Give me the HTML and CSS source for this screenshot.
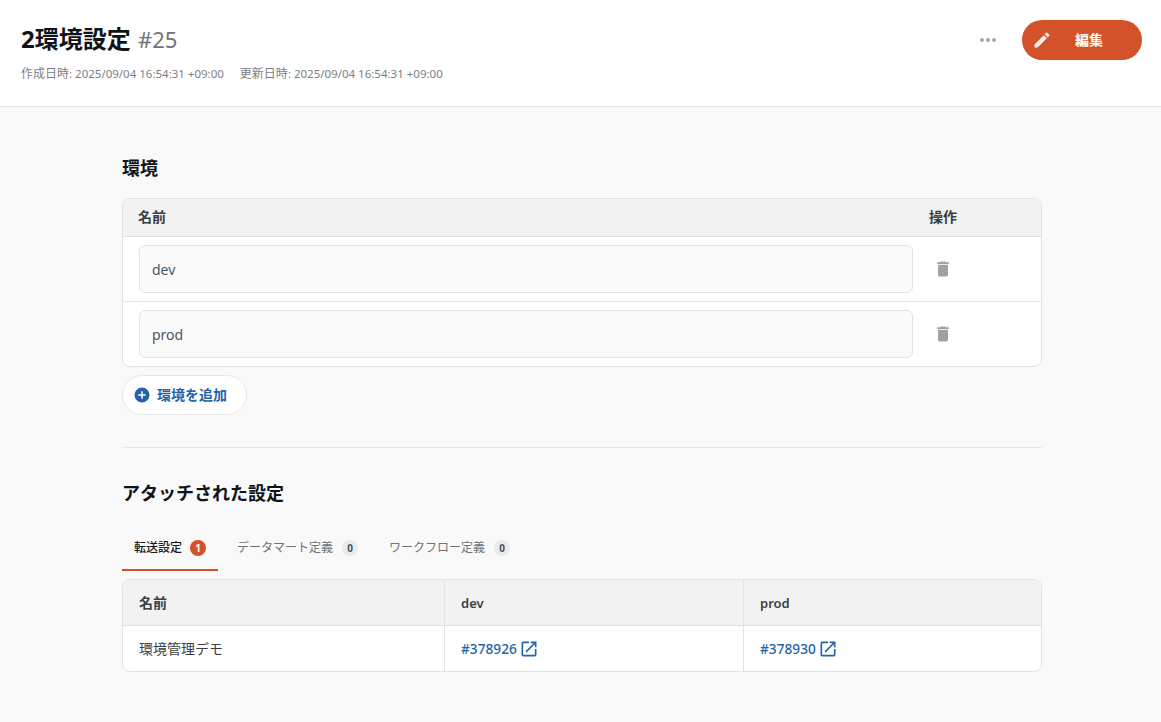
FILE: index.html
```html
<!DOCTYPE html>
<html lang="ja">
<head>
<meta charset="utf-8">
<title>2環境設定 #25</title>
<link rel="stylesheet" href="styles.css">
</head>
<body>
<header class="page-header">
  <div class="head-left">
    <h1 class="title">2環境設定 <span class="title-id">#25</span></h1>
    <div class="meta"><span>作成日時<span class="lat">: 2025/09/04 16:54:31 +09:00</span></span><span>更新日時<span class="lat">: 2025/09/04 16:54:31 +09:00</span></span></div>
  </div>
  <div class="head-right">
    <button class="more" aria-label="more"><i></i><i></i><i></i></button>
    <button class="edit">
      <svg class="edit-icon" viewBox="0 0 24 24" width="20" height="20"><path fill="#fff" fill-opacity=".9" d="M3 17.25V21h3.75L17.81 9.94l-3.75-3.75L3 17.25zM20.71 7.04a1 1 0 0 0 0-1.41l-2.34-2.34a1 1 0 0 0-1.41 0l-1.83 1.83 3.75 3.75 1.83-1.83z"/></svg>
      <span class="edit-label">編集</span>
    </button>
  </div>
</header>
<main class="content">
  <h2 class="section-title first">環境</h2>
  <div class="env-table">
    <div class="env-head"><div>名前</div><div>操作</div></div>
    <div class="env-row">
      <div class="input">dev</div>
      <div class="trash"><svg viewBox="0 0 24 24" width="20" height="20"><path fill="#9ea2a6" d="M6 19c0 1.1.9 2 2 2h8c1.1 0 2-.9 2-2V7H6v12zM19 4h-3.5l-1-1h-5l-1 1H5v2h14V4z"/></svg></div>
    </div>
    <div class="env-row">
      <div class="input">prod</div>
      <div class="trash"><svg viewBox="0 0 24 24" width="20" height="20"><path fill="#9ea2a6" d="M6 19c0 1.1.9 2 2 2h8c1.1 0 2-.9 2-2V7H6v12zM19 4h-3.5l-1-1h-5l-1 1H5v2h14V4z"/></svg></div>
    </div>
  </div>
  <button class="add">
    <svg viewBox="0 0 24 24" width="18" height="18"><path fill="#2563a8" d="M12 2a10 10 0 1 0 0 20 10 10 0 0 0 0-20zm5 11h-4v4h-2v-4H7v-2h4V7h2v4h4v2z"/></svg>
    <span class="add-label">環境を追加</span>
  </button>
  <hr class="divider">
  <h2 class="section-title">アタッチされた設定</h2>
  <nav class="tabs">
    <a class="tab active">転送設定 <b class="badge hot">1</b></a>
    <a class="tab">データマート定義 <b class="badge">0</b></a>
    <a class="tab">ワークフロー定義 <b class="badge">0</b></a>
  </nav>
  <div class="res-table">
    <div class="res-cell th cjk-cell">名前</div>
    <div class="res-cell th lat-cell">dev</div>
    <div class="res-cell th lat-cell">prod</div>
    <div class="res-cell td cjk-cell">環境管理デモ</div>
    <div class="res-cell td"><a class="link">#378926<svg viewBox="0 0 24 24" width="20" height="20"><path fill="#2563a8" d="M19 19H5V5h7V3H5a2 2 0 0 0-2 2v14a2 2 0 0 0 2 2h14a2 2 0 0 0 2-2v-7h-2v7zM14 3v2h3.59l-9.83 9.83 1.41 1.41L19 6.41V10h2V3h-7z"/></svg></a></div>
    <div class="res-cell td"><a class="link">#378930<svg viewBox="0 0 24 24" width="20" height="20"><path fill="#2563a8" d="M19 19H5V5h7V3H5a2 2 0 0 0-2 2v14a2 2 0 0 0 2 2h14a2 2 0 0 0 2-2v-7h-2v7zM14 3v2h3.59l-9.83 9.83 1.41 1.41L19 6.41V10h2V3h-7z"/></svg></a></div>
  </div>
</main>
</body>
</html>
```
FILE: styles.css
```css
* { box-sizing: border-box; }
html, body { margin: 0; height: 100%; }
body {
  background: #f9f9f9;
  color: #333;
  font-family: "Noto Sans", "Noto Sans CJK JP", sans-serif;
  overflow: hidden;
}
button { font-family: inherit; cursor: pointer; }

.page-header {
  height: 107px;
  background: #fff;
  border-bottom: 1px solid #e4e4e4;
  padding: 20px 19px 0 21px;
  display: flex;
  justify-content: space-between;
  align-items: flex-start;
}
.title {
  margin: 0;
  font-size: 24px;
  line-height: 38px;
  font-weight: 700;
  color: #0f1419;
}
.title-id { font-weight: 400; font-size: 22px; color: #6f757b; margin-left: 1px; }
.meta {
  margin-top: 7px;
  font-size: 12px;
  line-height: 18px;
  color: #7b7f84;
  display: flex;
  gap: 16px;
}
.lat { font-size: 11.5px; }
.head-right { display: flex; align-items: center; gap: 24px; }
.more {
  border: 0;
  background: none;
  padding: 0;
  width: 20px;
  display: flex;
  justify-content: center;
  gap: 2px;
}
.more i { width: 4px; height: 4px; border-radius: 50%; background: #a2a6aa; }
.edit {
  width: 120px;
  height: 40px;
  border: 0;
  border-radius: 20px;
  background: #d35229;
  color: #fff;
  display: flex;
  align-items: center;
  padding: 0 0 0 10px;
  font-size: 14px;
  font-weight: 700;
}
.edit-label { margin-left: 23px; padding-bottom: 2px; }

.content { width: 920px; margin: 0 0 0 122px; }
.section-title {
  margin: 0;
  font-size: 18px;
  line-height: 26px;
  font-weight: 700;
  color: #0f1419;
}
.section-title.first { padding-top: 48px; }

.env-table {
  margin-top: 17px;
  background: #fff;
  border: 1px solid #e3e3e3;
  border-radius: 8px;
  overflow: hidden;
}
.env-head {
  display: grid;
  grid-template-columns: 1fr 112px;
  height: 38px;
  padding-bottom: 3px;
  align-items: center;
  background: #f2f2f2;
  border-bottom: 1px solid #e0e0e0;
  padding-left: 15px;
  font-size: 14px;
  font-weight: 700;
  color: #3a3f44;
}
.env-row {
  display: grid;
  grid-template-columns: 1fr 128px;
  align-items: center;
  height: 64px;
  padding-left: 16px;
}
.env-row + .env-row { border-top: 1px solid #e6e6e6; height: 65px; }
.input {
  height: 48px;
  border: 1px solid #e3e3e3;
  border-radius: 6px;
  background: #fafafa;
  padding: 0 12px;
  display: flex;
  align-items: center;
  font-size: 14px;
  color: #4a5568;
}
.trash { display: flex; padding-left: 20px; }

.add {
  margin-top: 8px;
  width: 125px;
  height: 40px;
  border: 1px solid #e8e8e8;
  border-radius: 20px;
  background: #fff;
  display: flex;
  align-items: center;
  gap: 6px;
  padding: 0 0 0 10px;
  font-size: 14px;
  font-weight: 700;
  color: #2563a8;
}
.add-label { padding-bottom: 2px; }
.divider { margin: 32px 0 0; border: 0; border-top: 1px solid #e8e8e8; }
.divider + .section-title { margin-top: 32px; }

.tabs { display: flex; margin-top: 21px; height: 44px; }
.tab {
  display: flex;
  align-items: center;
  padding: 0 12px;
  gap: 9px;
  font-size: 12px;
  line-height: 18px;
  color: #6d7278;
  height: 44px;
  white-space: nowrap;
  border-bottom: 2px solid transparent;
}
.tab + .tab { margin-left: 7px; }
.tab.active { gap: 8px; color: #14181c; font-weight: 500; border-bottom-color: #d35229; }
.badge {
  width: 16px;
  height: 16px;
  border-radius: 50%;
  background: #e9ebee;
  color: #4a5058;
  font-size: 10px;
  font-weight: 700;
  display: flex;
  align-items: center;
  justify-content: center;
}
.badge.hot { background: #d35229; color: #fff; }

.res-table {
  margin-top: 8px;
  display: grid;
  grid-template-columns: 321px 299px 1fr;
  grid-template-rows: 46px 45px;
  background: #fff;
  border: 1px solid #e3e3e3;
  border-radius: 8px;
  overflow: hidden;
}
.res-cell {
  display: flex;
  align-items: center;
  padding-left: 16px;
  font-size: 14px;
  border-left: 1px solid #e3e3e3;
}
.res-cell:nth-child(3n+1) { border-left: 0; }
.lat-cell { font-size: 13px; }
.cjk-cell { padding-bottom: 2px; }
.th {
  background: #f2f2f2;
  border-bottom: 1px solid #e0e0e0;
  font-weight: 600;
  color: #3a3f44;
}
.td { color: #3a3f44; }
.link { display: flex; align-items: center; gap: 2px; color: #2563a8; font-weight: 500; font-size: 13.7px; }
```
